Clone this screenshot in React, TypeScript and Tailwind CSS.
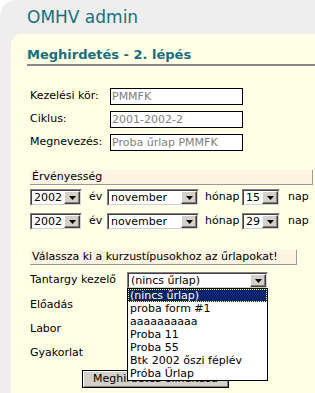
import React from "react";

function Arrow() {
  return (
    <div className="w-[16px] h-full bg-[#d4d0c8] border border-t-white border-l-white border-r-[#404040] border-b-[#404040] flex items-center justify-center shadow-[inset_-1px_-1px_0_#808080]">
      <svg width="7" height="4" viewBox="0 0 7 4">
        <path d="M0 0h7L3.5 4z" fill="#000" />
      </svg>
    </div>
  );
}

function Sel({ w, value }: { w: number; value: string }) {
  return (
    <div
      className="h-[17px] flex bg-white border border-t-[#808080] border-l-[#808080] border-r-white border-b-white"
      style={{ width: w }}
    >
      <div className="flex flex-1 h-full border border-t-[#404040] border-l-[#404040] border-r-[#d4d0c8] border-b-[#d4d0c8] min-w-0">
        <div className="flex-1 pl-[2px] leading-[13px] text-[11px] text-black truncate">{value}</div>
        <Arrow />
      </div>
    </div>
  );
}

function TextInput({ value }: { value: string }) {
  return (
    <div className="w-[133px] h-[17px] border border-black bg-white pl-[1px] text-[11px] leading-[15px] text-[#808080]">
      {value}
    </div>
  );
}

export default function App() {
  const items = [
    "(nincs űrlap)",
    "proba form #1",
    "aaaaaaaaaa",
    "Proba 11",
    "Proba 55",
    "Btk 2002 őszi féplév",
    "Próba Űrlap",
  ];
  return (
    <div className="w-[315px] h-[393px] bg-white overflow-hidden font-['DejaVu_Sans',Verdana,sans-serif] text-black text-[11px]">
      <div className="relative w-full h-full bg-[#eeeeee] rounded-tl-[16px] flex flex-col">
        <div className="h-[34px] pl-[27px] pt-[6px] text-[17px] leading-[22px] text-[#17707f]">OMHV admin</div>
        <div className="ml-[11px] flex-1 bg-[#ffffe6] rounded-tl-[10px] flex flex-col">
          <div className="ml-[16px] mt-[13px] border-b-2 border-[#888888] text-[13px] font-bold leading-[16px] pb-[1px] text-[#17707f]">
            Meghirdetés - 2. lépés
          </div>
          <div className="ml-[19px] mt-[22px] flex flex-col gap-[6px]">
            <div className="flex items-center h-[17px]">
              <div className="w-[80px]">Kezelési kör:</div>
              <TextInput value="PMMFK" />
            </div>
            <div className="flex items-center h-[17px]">
              <div className="w-[80px]">Ciklus:</div>
              <TextInput value="2001-2002-2" />
            </div>
            <div className="flex items-center h-[17px]">
              <div className="w-[80px]">Megnevezés:</div>
              <TextInput value="Proba űrlap PMMFK" />
            </div>
          </div>
          <div className="ml-[19px] mt-[19px] mr-[2px] h-[15px] bg-[#fdf3e1] border-r border-b border-[#999999] pl-[2px] leading-[14px]">
            Érvényesség
          </div>
          <div className="ml-[19px] mt-[4px] flex flex-col gap-[7px]">
            {["15", "29"].map((d) => (
              <div key={d} className="flex items-center h-[17px]">
                <Sel w={52} value="2002" />
                <span className="ml-[7px] w-[18px]">év</span>
                <Sel w={92} value="november" />
                <span className="ml-[6px] w-[37px]">hónap</span>
                <Sel w={38} value={d} />
                <span className="ml-[8px]">nap</span>
              </div>
            ))}
          </div>
          <div className="ml-[19px] mt-[20px] w-[267px] h-[15px] bg-[#fdf3e1] border-r border-b border-[#999999] pl-[2px] leading-[14px]">
            Válassza ki a kurzustípusokhoz az űrlapokat!
          </div>
          <div className="ml-[19px] mt-[7px] flex flex-col">
            <div className="flex items-center h-[17px]">
              <div className="w-[97px]">Tantargy kezelő</div>
              <Sel w={141} value="(nincs űrlap)" />
            </div>
            <div className="flex items-center h-[24px] mt-[4px]">Előadás</div>
            <div className="flex items-center h-[24px]">Labor</div>
            <div className="flex items-center h-[24px]">Gyakorlat</div>
          </div>
          <div className="ml-[71px] mt-[5px] w-[147px] h-[18px] bg-[#d4d0c8] border border-black shadow-[inset_1px_1px_0_#ffffff,inset_-1px_-1px_0_#808080] text-center text-[11px] leading-[15px]">
            Meghirdetés elindítása
          </div>
        </div>
        <div className="absolute left-[127px] top-[288px] w-[141px] bg-white border border-black flex flex-col">
          {items.map((it, i) => (
            <div
              key={it}
              className={
                i === 0
                  ? "h-[13px] leading-[12px] px-[1px] bg-[#0a246a] text-white border border-dotted border-[#ffff99]"
                  : "h-[13px] leading-[13px] px-[2px]"
              }
            >
              {it}
            </div>
          ))}
        </div>
      </div>
    </div>
  );
}
